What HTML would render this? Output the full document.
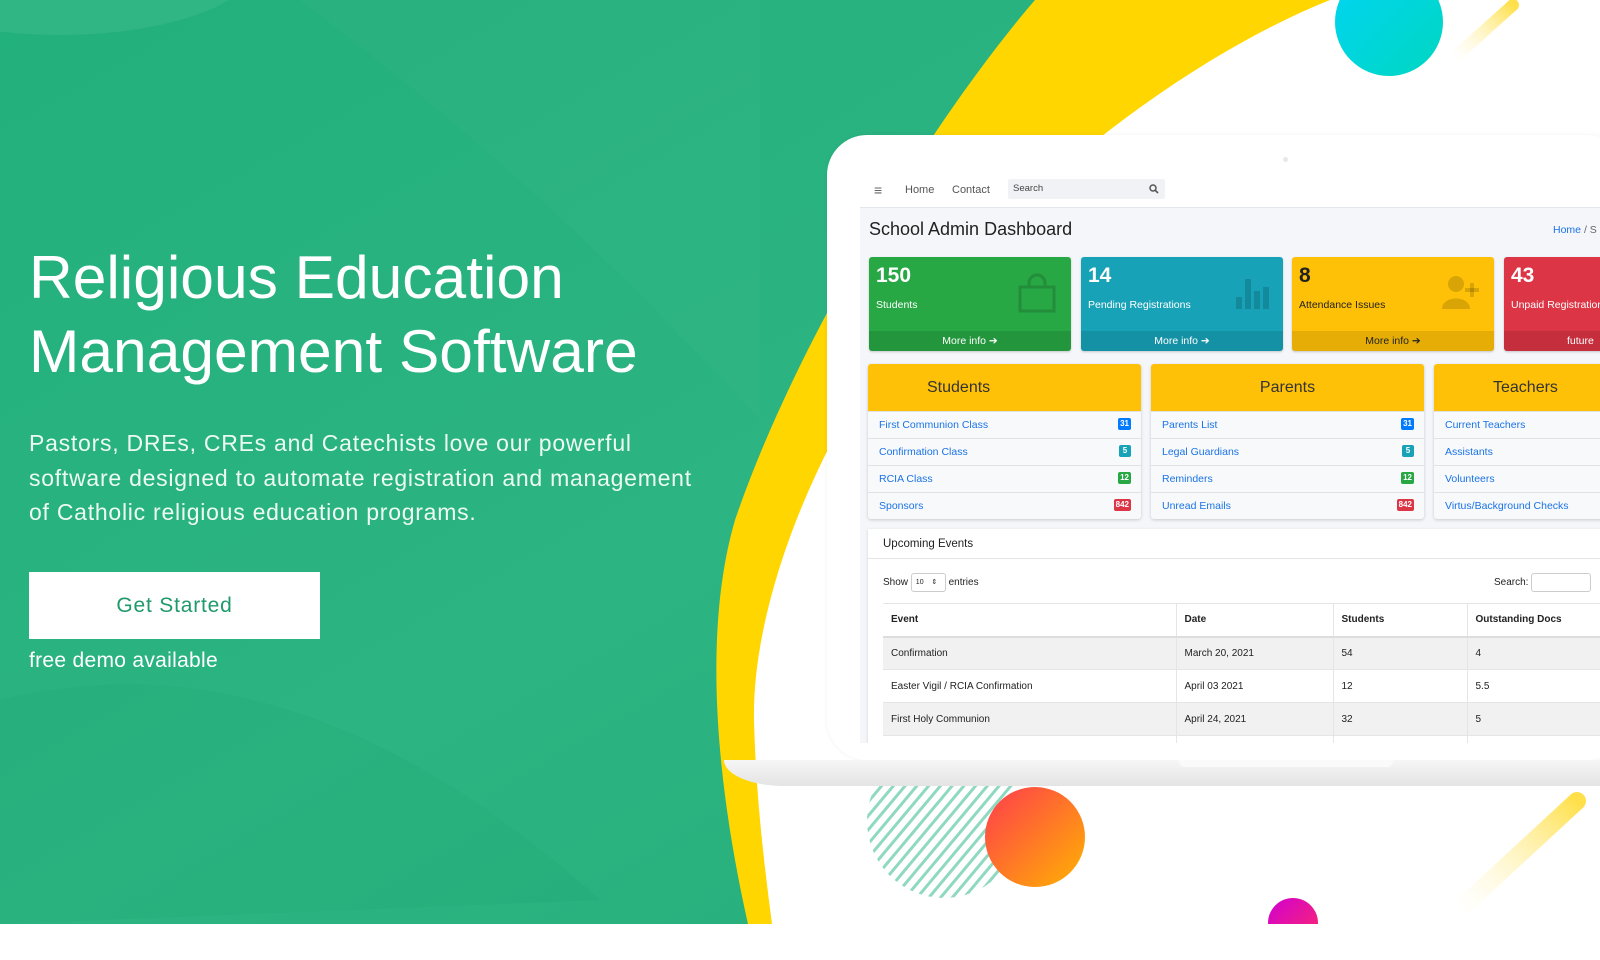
<!DOCTYPE html>
<html><head><meta charset="utf-8">
<style>
*{margin:0;padding:0;box-sizing:border-box}
body{width:1600px;height:960px;overflow:hidden;background:#fff;font-family:"Liberation Sans",sans-serif;position:relative}
.abs{position:absolute}
.hero{position:absolute;left:0;top:0;width:1600px;height:924px;overflow:hidden}
.h1{position:absolute;left:29px;top:240px;color:#fff;font-size:60.5px;font-weight:500;line-height:74px;letter-spacing:0;white-space:nowrap}
.p{position:absolute;left:29px;top:426px;color:#eefaf4;font-size:23px;line-height:34.5px;white-space:nowrap;letter-spacing:0.75px}
.btn{position:absolute;left:29px;top:572px;width:291px;height:67px;background:#fff;color:#1f9a6a;font-size:21px;letter-spacing:0.8px;text-align:center;line-height:67px}
.demo{position:absolute;left:29px;top:649px;color:#fff;font-size:21px;letter-spacing:0.3px}
.d{font-family:"Liberation Sans Narrow","Liberation Sans",sans-serif}
.screen{position:absolute;left:860px;top:172px;width:740px;height:571px;background:#f4f6f9;overflow:hidden}
.nav{position:absolute;left:0;top:0;width:740px;height:36px;background:#fff;border-bottom:1px solid #e3e6ea;font-size:11px;color:#555}
.sb{position:absolute;top:85px;width:202px;height:94px;border-radius:3px;color:#fff;overflow:hidden;box-shadow:0 1px 2px rgba(0,0,0,.2)}
.sb .n{position:absolute;left:7px;top:7px;font-size:21px;font-weight:bold}
.sb .l{position:absolute;left:7px;top:42px;font-size:10.5px}
.sb .f{position:absolute;left:0;bottom:0;width:100%;height:20px;line-height:20px;text-align:center;font-size:10.5px;background:rgba(0,0,0,.1)}
.card{position:absolute;top:192px;width:273px;height:155px;background:#f8f9fa;border-radius:3px;box-shadow:0 1px 3px rgba(0,0,0,.18);overflow:hidden}
.card .hd{height:47px;background:#ffc107;color:#333;font-size:16px;text-align:center;line-height:47px}
.card .r{height:27px;border-top:1px solid #e2e2e2;color:#1a73e8;font-size:10.5px;line-height:26px;padding-left:11px;position:relative}
.bd{position:absolute;right:10px;top:6px;height:12px;min-width:12px;padding:0 2px;border-radius:2px;color:#fff;font-size:8px;line-height:12px;font-weight:bold;text-align:center}
.ev{position:absolute;left:8px;top:357px;width:760px;height:240px;background:#fff;box-shadow:0 1px 3px rgba(0,0,0,.15)}
table{border-collapse:collapse;position:absolute;left:15px;top:74px;width:720px;font-size:10px;color:#222}
td,th{text-align:left;padding-left:8px;border-right:1px solid #e5e5e5}
th{height:33px;border-bottom:2px solid #ddd;border-top:1px solid #e5e5e5}
td{height:33px;border-bottom:1px solid #e5e5e5}
tr.g td{background:#f1f1f1}
</style></head><body>
<div class="hero">
<svg class="abs" style="left:0;top:0" width="1600" height="924">
<defs>
<linearGradient id="gg" x1="0" y1="0" x2="1" y2="1"><stop offset="0" stop-color="#22b07c"/><stop offset="0.5" stop-color="#2cb482"/><stop offset="1" stop-color="#24ad78"/></linearGradient>
<linearGradient id="or" x1="0" y1="0" x2="1" y2="1"><stop offset="0" stop-color="#ff3b4e"/><stop offset="1" stop-color="#ffb300"/></linearGradient>
<linearGradient id="cy" x1="0" y1="0" x2="1" y2="1"><stop offset="0" stop-color="#00d5f5"/><stop offset="1" stop-color="#00d6c0"/></linearGradient>
<linearGradient id="mg" x1="0" y1="0" x2="1" y2="1"><stop offset="0" stop-color="#d000d0"/><stop offset="1" stop-color="#ff2a6a"/></linearGradient>
<linearGradient id="yl" x1="1" y1="0" x2="0" y2="1"><stop offset="0" stop-color="#ffe04a"/><stop offset="1" stop-color="#fff6c8" stop-opacity="0"/></linearGradient>
<pattern id="st" width="9" height="9" patternUnits="userSpaceOnUse" patternTransform="rotate(40)"><rect width="3" height="9" fill="#8fd9c0"/></pattern>
</defs>
<rect width="1600" height="924" fill="url(#gg)"/>
<ellipse cx="60" cy="-40" rx="200" ry="75" fill="#3dbb8c" opacity=".5"/>
<path d="M300,0 C500,150 650,300 760,420 L760,0Z" fill="#37b888" opacity=".25"/>
<path d="M0,700 C200,650 400,720 600,900 L0,924Z" fill="#1fa874" opacity=".25"/>
<path d="M1035,0 C940,110 800,330 735,520 C700,640 720,800 748,924 L1600,924 L1600,0 Z" fill="#ffd600"/>
<path d="M1330,0 C1180,60 1000,200 880,360 C800,480 752,620 754,720 C756,800 765,870 772,924 L1600,924 L1600,0 Z" fill="#fff"/>
<circle cx="1389" cy="22" r="54" fill="url(#cy)"/>
<line x1="1513" y1="5" x2="1454" y2="58" stroke="url(#yl)" stroke-width="12" stroke-linecap="round"/>
<line x1="1577" y1="801" x2="1459" y2="910" stroke="url(#yl)" stroke-width="18" stroke-linecap="round"/>
<circle cx="944" cy="821" r="77" fill="url(#st)"/>
<circle cx="1035" cy="837" r="50" fill="url(#or)"/>
<circle cx="1293" cy="923" r="25" fill="url(#mg)"/>
</svg>
<div class="abs" style="left:827px;top:135px;width:800px;height:625px;background:#fff;border-radius:40px;box-shadow:0 0 4px rgba(0,0,0,.06)"></div>
<div class="abs" style="left:1283px;top:157px;width:5px;height:5px;border-radius:50%;background:#e8e8e8"></div>
<div class="abs" style="left:724px;top:760px;width:900px;height:26px;background:linear-gradient(#f6f6f6,#e4e4e4);border-radius:0 0 0 60px/0 0 0 26px"></div>
<div class="abs" style="left:1179px;top:760px;width:214px;height:7px;background:#fafafa;border-radius:0 0 6px 6px"></div>
</div>
<div class="screen d">
<div class="nav">
<div class="abs" style="left:14px;top:10px;font-size:14px;color:#666">≡</div>
<div class="abs" style="left:45px;top:12px">Home</div>
<div class="abs" style="left:92px;top:12px">Contact</div>
<div class="abs" style="left:148px;top:7px;width:157px;height:20px;background:#f0f2f5;border-radius:2px;font-size:9.5px;line-height:20px;padding-left:5px;color:#444">Search<svg class="abs" style="right:6px;top:5px" width="10" height="10"><circle cx="4" cy="4" r="3" fill="none" stroke="#555" stroke-width="1.5"/><line x1="6.3" y1="6.3" x2="9" y2="9" stroke="#555" stroke-width="1.6"/></svg></div>
</div>
<div class="abs" style="left:9px;top:47px;font-size:18px;color:#222">School Admin Dashboard</div>
<div class="abs" style="left:693px;top:52px;font-size:10.5px;color:#1a73e8">Home <span style="color:#666">/ S</span></div>
<div class="sb" style="left:9px;background:#28a745"><div class="n">150</div><div class="l">Students</div>
<svg class="abs" style="left:148px;top:16px" width="40" height="40"><path d="M3,14 H37 V38 H3 Z M12,14 V10 A8,8 0 0 1 28,10 V14" fill="none" stroke="rgba(0,0,0,.15)" stroke-width="3"/></svg>
<div class="f">More info ➔</div></div>
<div class="sb" style="left:221px;background:#17a2b8"><div class="n">14</div><div class="l">Pending Registrations</div>
<svg class="abs" style="left:155px;top:18px" width="34" height="34"><g fill="rgba(0,0,0,.15)"><rect x="0" y="22" width="6" height="12"/><rect x="9" y="4" width="6" height="30"/><rect x="18" y="16" width="6" height="18"/><rect x="27" y="12" width="6" height="22"/></g></svg>
<div class="f">More info ➔</div></div>
<div class="sb" style="left:432px;background:#ffc107;color:#222"><div class="n">8</div><div class="l">Attendance Issues</div>
<svg class="abs" style="left:148px;top:16px" width="40" height="40"><g fill="rgba(0,0,0,.15)"><circle cx="16" cy="11" r="8"/><path d="M2,36 C2,22 30,22 30,36Z"/><rect x="30" y="10" width="4" height="14"/><rect x="25" y="15" width="14" height="4"/></g></svg>
<div class="f">More info ➔</div></div>
<div class="sb" style="left:644px;background:#dc3545"><div class="n">43</div><div class="l">Unpaid Registrations</div><div class="f" style="text-align:left;padding-left:63px">future</div></div>
<div class="card" style="left:8px"><div class="hd" style="text-align:left;padding-left:59px">Students</div>
<div class="r">First Communion Class<span class="bd" style="background:#007bff">31</span></div>
<div class="r">Confirmation Class<span class="bd" style="background:#17a2b8">5</span></div>
<div class="r">RCIA Class<span class="bd" style="background:#28a745">12</span></div>
<div class="r">Sponsors<span class="bd" style="background:#dc3545">842</span></div></div>
<div class="card" style="left:291px"><div class="hd">Parents</div>
<div class="r">Parents List<span class="bd" style="background:#007bff">31</span></div>
<div class="r">Legal Guardians<span class="bd" style="background:#17a2b8">5</span></div>
<div class="r">Reminders<span class="bd" style="background:#28a745">12</span></div>
<div class="r">Unread Emails<span class="bd" style="background:#dc3545">842</span></div></div>
<div class="card" style="left:574px"><div class="hd" style="text-align:left;padding-left:59px">Teachers</div>
<div class="r">Current Teachers</div><div class="r">Assistants</div><div class="r">Volunteers</div><div class="r">Virtus/Background Checks</div></div>
<div class="ev">
<div style="height:30px;border-bottom:1px solid #e5e5e5;font-size:11.5px;color:#222;line-height:30px;padding-left:15px">Upcoming Events</div>
<div class="abs" style="left:15px;top:44px;font-size:10px;color:#222">Show <span style="display:inline-block;border:1px solid #ccc;border-radius:3px;width:35px;height:19px;font-size:7px;line-height:17px;padding-left:4px;vertical-align:middle">10 &nbsp;&nbsp; ⇕</span> entries</div>
<div class="abs" style="left:626px;top:44px;font-size:10px;color:#222">Search: <span style="display:inline-block;border:1px solid #ccc;border-radius:3px;width:60px;height:19px;vertical-align:middle"></span></div>
<table>
<tr><th style="width:293px">Event</th><th style="width:157px">Date</th><th style="width:134px">Students</th><th>Outstanding Docs</th></tr>
<tr class="g"><td>Confirmation</td><td>March 20, 2021</td><td>54</td><td>4</td></tr>
<tr><td>Easter Vigil / RCIA Confirmation</td><td>April 03 2021</td><td>12</td><td>5.5</td></tr>
<tr class="g"><td>First Holy Communion</td><td>April 24, 2021</td><td>32</td><td>5</td></tr>
<tr><td></td><td></td><td></td><td></td></tr>
</table>
</div>
</div>
<div class="h1">Religious Education<br>Management Software</div>
<div class="p">Pastors, DREs, CREs and Catechists love our powerful<br>software designed to automate registration and management<br>of Catholic religious education programs.</div>
<div class="btn">Get Started</div>
<div class="demo">free demo available</div>
</body></html>
